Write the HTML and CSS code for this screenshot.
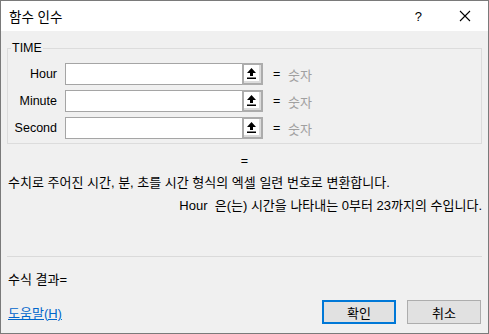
FILE: index.html
```html
<!doctype html>
<html lang="ko">
  <head>
    <meta charset="UTF-8" />
    <title>함수 인수</title>
    <link rel="stylesheet" href="styles.css">
  </head>
  <body>
    <div class="dialog">
      <div class="titlebar">
        <span class="title">함수 인수</span>
        <span class="help">?</span>
        <svg class="close" width="12" height="12" viewBox="0 0 12 12">
          <path d="M1 1 L11 11 M11 1 L1 11" stroke="#000" stroke-width="1.1" fill="none" />
        </svg>
      </div>

      <div class="content">
        <fieldset class="args">
          <legend>TIME</legend>

          <div class="arg-row">
            <label class="arg-label">Hour</label>
            <div class="arg-input">
              <span class="arg-text"></span>
              <span class="arg-btn">
                <svg width="9" height="11" viewBox="0 0 9 11"><path d="M4.5 0 L9 5 L6 5 L6 8 L3 8 L3 5 L0 5 Z M0 9.5 H9 V11 H0 Z" fill="#000" /></svg>
              </span>
            </div>
            <span class="eq">=</span>
            <span class="arg-type">숫자</span>
          </div>

          <div class="arg-row">
            <label class="arg-label">Minute</label>
            <div class="arg-input">
              <span class="arg-text"></span>
              <span class="arg-btn">
                <svg width="9" height="11" viewBox="0 0 9 11"><path d="M4.5 0 L9 5 L6 5 L6 8 L3 8 L3 5 L0 5 Z M0 9.5 H9 V11 H0 Z" fill="#000" /></svg>
              </span>
            </div>
            <span class="eq">=</span>
            <span class="arg-type">숫자</span>
          </div>

          <div class="arg-row">
            <label class="arg-label">Second</label>
            <div class="arg-input">
              <span class="arg-text"></span>
              <span class="arg-btn">
                <svg width="9" height="11" viewBox="0 0 9 11"><path d="M4.5 0 L9 5 L6 5 L6 8 L3 8 L3 5 L0 5 Z M0 9.5 H9 V11 H0 Z" fill="#000" /></svg>
              </span>
            </div>
            <span class="eq">=</span>
            <span class="arg-type">숫자</span>
          </div>
        </fieldset>

        <div class="result-eq">=</div>
        <p class="desc">수치로 주어진 시간, 분, 초를 시간 형식의 엑셀 일련 번호로 변환합니다.</p>
        <p class="arg-desc">Hour&nbsp;&nbsp;은(는) 시간을 나타내는 0부터 23까지의 수입니다.</p>

        <div class="separator"></div>

        <p class="formula">수식 결과=</p>

        <div class="footer">
          <a href="#" class="help-link">도움말(H)</a>
          <div class="buttons">
            <button class="btn btn-default">확인</button>
            <button class="btn">취소</button>
          </div>
        </div>
      </div>
    </div>
  </body>
</html>
```

FILE: styles.css
```css
body {
  margin: 0;
  font-family: "Liberation Sans", "Noto Sans CJK KR", sans-serif;
  font-size: 12.5px;
  color: #000;
}
.dialog {
  width: 489px;
  height: 334px;
  box-sizing: border-box;
  border: 1px solid #7a7a7a;
  background: #f0f0f0;
  display: flex;
  flex-direction: column;
}
.titlebar {
  height: 30px;
  background: #fff;
  display: flex;
  align-items: center;
  padding-left: 8px;
}
.title {
  flex: 1;
  font-size: 13.5px;
  margin-top: -1px;
}
.help {
  font-size: 13px;
  margin-right: 37px;
}
.close {
  margin-right: 17px;
}
.content {
  padding: 0 6px;
}
.args {
  margin: 10px 0 0;
  padding: 8px 0 4px;
  border: 1px solid #dcdcdc;
  border-radius: 0;
}
.args legend {
  margin-left: 3px;
  padding: 0 1px;
  line-height: 14px;
}
.arg-row {
  display: flex;
  align-items: center;
  height: 22px;
  margin-bottom: 5px;
}
.arg-row:last-child {
  margin-bottom: 0;
}
.arg-label {
  width: 49px;
  text-align: right;
  margin-right: 8px;
}
.arg-input {
  width: 198px;
  height: 22px;
  box-sizing: border-box;
  border: 1px solid #a5a5a5;
  background: #fff;
  display: flex;
}
.arg-text {
  flex: 1;
}
.arg-btn {
  width: 21px;
  margin: -1px -1px -1px 0;
  box-sizing: border-box;
  border: 2px solid #acacac;
  background: #fff;
  box-shadow: inset -2px -2px 0 #dcdcdc;
  display: flex;
  justify-content: center;
  padding-top: 3px;
  padding-right: 2px;
}
.eq {
  margin-left: 10px;
  width: 15px;
}
.arg-type {
  color: #a0a0a0;
  font-size: 13px;
}
.result-eq {
  text-align: center;
  margin-top: 9px;
  line-height: 16px;
}
.desc {
  margin: 6px 0 0 1px;
  line-height: 16px;
  font-size: 13px;
}
.arg-desc {
  margin: 7px 0 0;
  text-align: right;
  line-height: 16px;
  font-size: 13px;
}
.separator {
  margin-top: 42px;
  border-top: 1px solid #dadada;
}
.formula {
  margin: 15px 0 0 1px;
  line-height: 16px;
  font-size: 13px;
}
.footer {
  display: flex;
  justify-content: space-between;
  align-items: center;
  margin-top: 12px;
}
.help-link {
  color: #0066cc;
  margin-left: 1px;
  font-size: 13px;
}
.buttons {
  display: flex;
  gap: 11px;
  margin-right: 1px;
}
.btn {
  width: 74px;
  height: 24px;
  font-family: inherit;
  font-size: 13px;
  background: #e1e1e1;
  border: 1px solid #adadad;
  padding: 0;
}
.btn-default {
  border: 2px solid #0078d7;
}
```
